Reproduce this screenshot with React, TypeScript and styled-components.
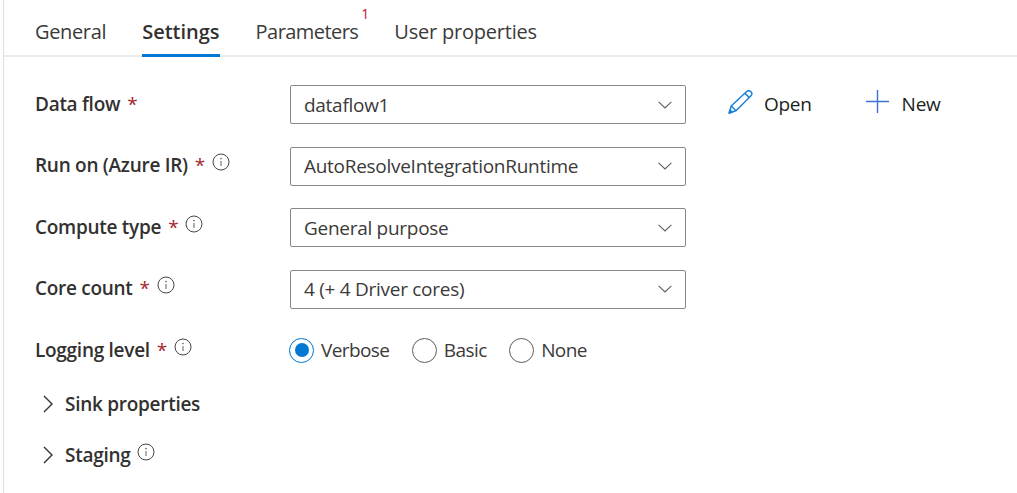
import React from "react";
import styled, { createGlobalStyle } from "styled-components";

const Global = createGlobalStyle`
  html, body { margin: 0; padding: 0; background: #fff; }
  body { font-family: "Open Sans", "Noto Sans", "Liberation Sans", sans-serif; }
`;

const Page = styled.div`
  width: 1014px;
  height: 493px;
  margin-left: 3px;
  box-sizing: border-box;
  overflow: hidden;
  border-left: 1px solid #e1dfdd;
  color: #323130;
`;

const TabBar = styled.div`
  display: flex;
  height: 57px;
  box-sizing: border-box;
  border-bottom: 2px solid #edebe9;
  padding-left: 31px;
  gap: 36px;
`;

const Tab = styled.div<{ $active?: boolean; $spacing?: number }>`
  position: relative;
  height: 57px;
  box-sizing: border-box;
  padding-top: 19px;
  font-size: 20px;
  line-height: 26px;
  letter-spacing: ${(p) => p.$spacing ?? -0.35}px;
  color: #3b3a39;
  font-weight: ${(p) => (p.$active ? 600 : 400)};
  ${(p) => p.$active && `color: #323130; border-bottom: 3px solid #0078d4;`}
`;

const Badge = styled.span`
  position: absolute;
  top: 6px;
  right: -11px;
  font-size: 14px;
  line-height: 16px;
  color: #c50f1f;
  letter-spacing: 0;
`;

const Form = styled.div`
  display: flex;
  flex-direction: column;
  padding: 28px 0 0 31px;
  gap: 22.67px;
`;

const Row = styled.div`
  display: flex;
  align-items: center;
  height: 39px;
`;

const Label = styled.div`
  width: 255px;
  flex: none;
  display: flex;
  align-items: center;
  font-size: 19px;
  line-height: 24px;
  font-weight: 600;
  letter-spacing: -0.28px;
  color: #323130;
  position: relative;
  top: -1px;
`;

const Star = styled.span`
  color: #a4262c;
  font-weight: 400;
  margin-left: 7px;
`;

const InfoIcon = styled.svg`
  width: 18px;
  height: 18px;
  margin-left: 7px;
  position: relative;
  top: -3px;
  flex: none;
`;

const Select = styled.div`
  width: 396px;
  height: 39px;
  box-sizing: border-box;
  border: 1px solid #8a8886;
  border-radius: 2px;
  display: flex;
  align-items: center;
  justify-content: space-between;
  padding: 0 13px;
  font-size: 19px;
  letter-spacing: -0.28px;
  color: #3b3a39;
`;

const Actions = styled.div`
  display: flex;
  align-items: center;
  margin: -2px 0 0 42px;
  gap: 54px;
`;

const Action = styled.div<{ $gap: number }>`
  display: flex;
  align-items: center;
  gap: ${(p) => p.$gap}px;
  font-size: 19px;
  letter-spacing: -0.28px;
  color: #201f1e;
  svg { margin-bottom: 4px; flex: none; }
`;

const Radios = styled.div`
  display: flex;
  align-items: center;
  gap: 22.5px;
  margin: -2px 0 0 -1px;
`;

const Radio = styled.div`
  display: flex;
  align-items: center;
  gap: 7px;
  font-size: 19px;
  letter-spacing: -0.6px;
  color: #3b3a39;
`;

const Circle = styled.span<{ $on?: boolean }>`
  width: 25px;
  height: 25px;
  box-sizing: border-box;
  border-radius: 50%;
  border: 1px solid ${(p) => (p.$on ? "#0078d4" : "#605e5c")};
  display: flex;
  align-items: center;
  justify-content: center;
  &::after {
    content: "";
    display: ${(p) => (p.$on ? "block" : "none")};
    width: 14px;
    height: 14px;
    border-radius: 50%;
    background: #0078d4;
  }
`;

const Sections = styled.div`
  display: flex;
  flex-direction: column;
  padding: 21px 0 0 39px;
  gap: 27px;
`;

const Section = styled.div`
  display: flex;
  align-items: center;
  height: 24px;
  font-size: 19px;
  line-height: 24px;
  font-weight: 600;
  letter-spacing: -0.28px;
  color: #323130;
`;

const SectionChevron = styled.svg`
  width: 10px;
  height: 18px;
  margin-right: 12px;
  flex: none;
`;

const Info = () => (
  <InfoIcon viewBox="0 0 18 18" fill="none">
    <circle cx="9" cy="9" r="8" stroke="#484644" strokeWidth="1" />
    <circle cx="9" cy="5.6" r="0.8" fill="#605e5c" />
    <path d="M9 8V13" stroke="#605e5c" strokeWidth="1" />
  </InfoIcon>
);

const Pencil = () => (
  <svg width="25" height="24" viewBox="0 0 25 24" fill="none" stroke="#1a80d8" strokeWidth="1.5" strokeLinejoin="round">
    <path d="M1.2 23 L3.2 16 L18.4 1.8 C19.9 0.5 21.9 0.6 23 1.8 C24.2 3.1 24 4.8 22.8 6 L8 20.8 Z" />
    <path d="M17 3.4 L21.4 7.6" />
    <path d="M3.2 16 L8 20.8" />
    <path d="M1.2 23 L2 20 L4.4 22 Z" fill="#1a80d8" />
  </svg>
);

const PlusIcon = () => (
  <svg width="23" height="23" viewBox="0 0 23 23" fill="none" stroke="#3f6fd1" strokeWidth="1.4">
    <path d="M11.5 0V23M0 11.5H23" />
  </svg>
);

const DropChevron = () => (
  <svg width="14" height="8" viewBox="0 0 14 8" fill="none" stroke="#605e5c" strokeWidth="1.1">
    <path d="M0.6 0.8L7 7L13.4 0.8" />
  </svg>
);

const RightChevron = () => (
  <SectionChevron viewBox="0 0 10 18" fill="none" stroke="#323130" strokeWidth="1.4">
    <path d="M1 1L9 9L1 17" />
  </SectionChevron>
);

const fields = [
  { label: "Run on (Azure IR)", value: "AutoResolveIntegrationRuntime" },
  { label: "Compute type", value: "General purpose" },
  { label: "Core count", value: "4 (+ 4 Driver cores)" },
];

const Field = ({ value }: { value: string }) => (
  <Select>
    <span>{value}</span>
    <DropChevron />
  </Select>
);

export default function App() {
  return (
    <Page>
      <Global />
      <TabBar>
        <Tab>General</Tab>
        <Tab $active $spacing={0}>Settings</Tab>
        <Tab $spacing={-0.55}>
          Parameters<Badge>1</Badge>
        </Tab>
        <Tab $spacing={-0.22}>User properties</Tab>
      </TabBar>
      <Form>
        <Row>
          <Label>
            Data flow<Star>*</Star>
          </Label>
          <Field value="dataflow1" />
          <Actions>
            <Action $gap={11}>
              <Pencil />
              Open
            </Action>
            <Action $gap={13}>
              <PlusIcon />
              New
            </Action>
          </Actions>
        </Row>
        {fields.map((f) => (
          <Row key={f.label}>
            <Label>
              {f.label}
              <Star>*</Star>
              <Info />
            </Label>
            <Field value={f.value} />
          </Row>
        ))}
        <Row>
          <Label>
            Logging level<Star>*</Star>
            <Info />
          </Label>
          <Radios>
            <Radio>
              <Circle $on />
              Verbose
            </Radio>
            <Radio>
              <Circle />
              Basic
            </Radio>
            <Radio>
              <Circle />
              None
            </Radio>
          </Radios>
        </Row>
      </Form>
      <Sections>
        <Section>
          <RightChevron />
          Sink properties
        </Section>
        <Section>
          <RightChevron />
          Staging
          <Info />
        </Section>
      </Sections>
    </Page>
  );
}
